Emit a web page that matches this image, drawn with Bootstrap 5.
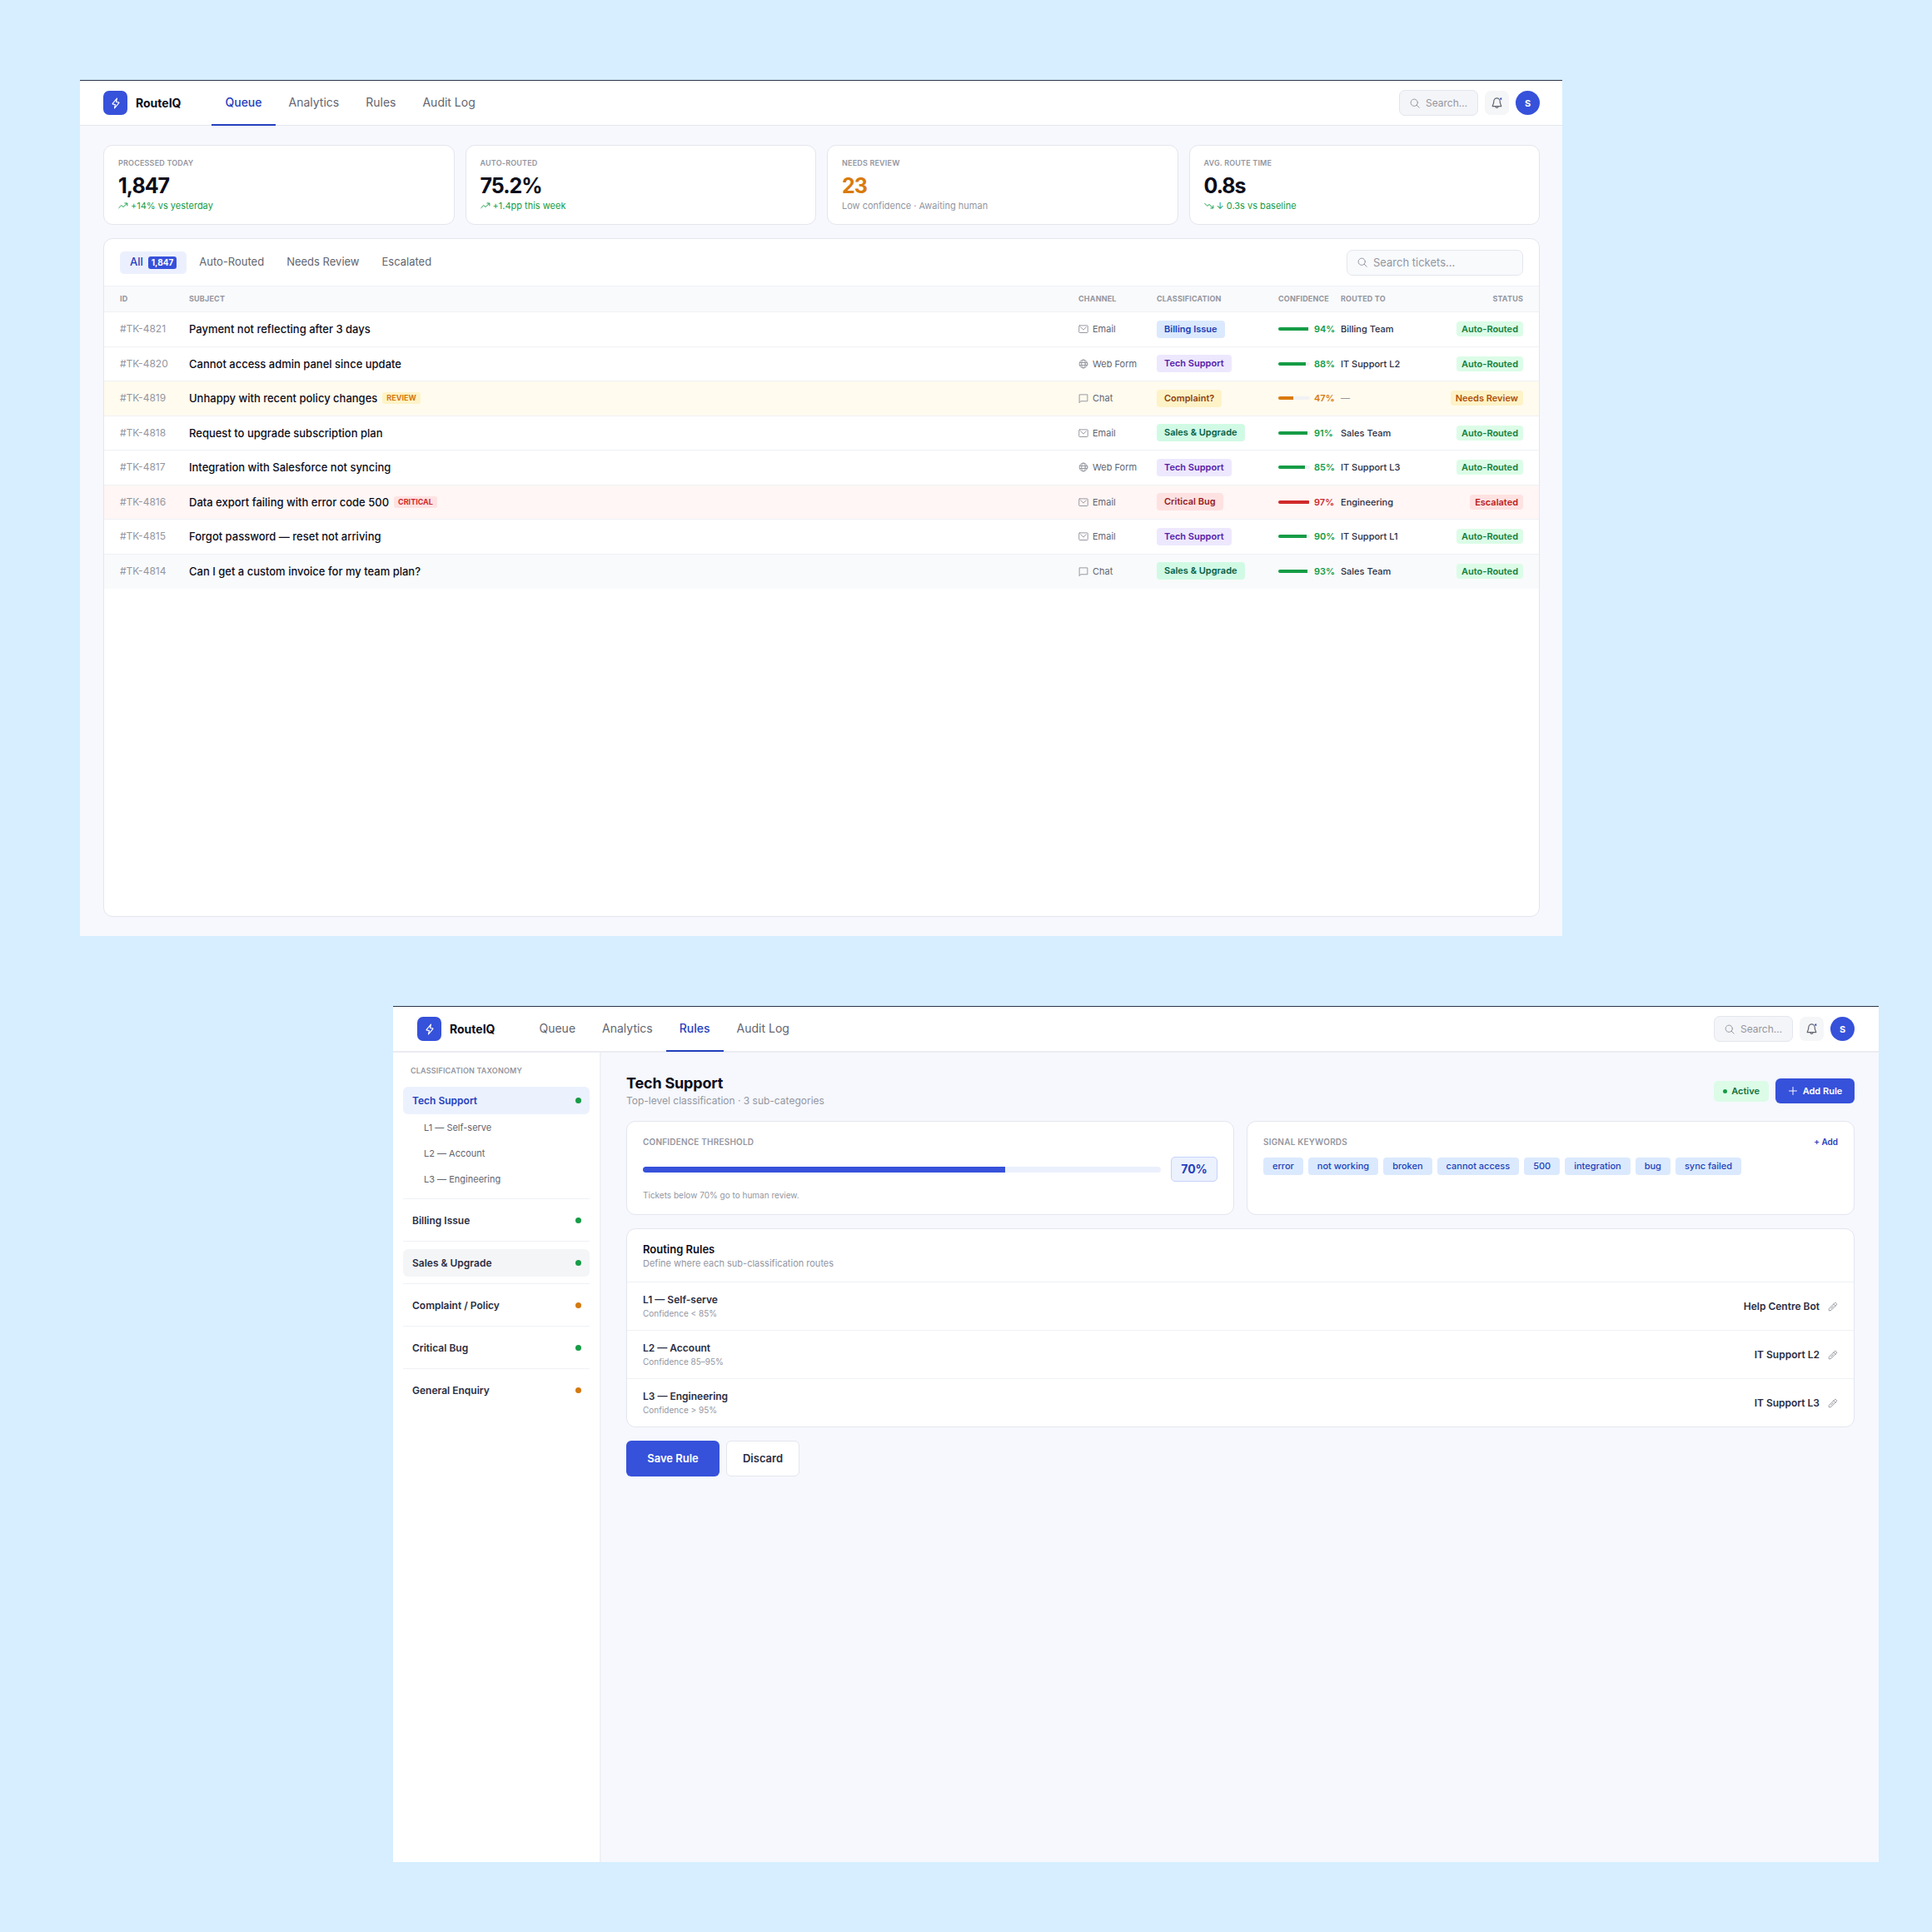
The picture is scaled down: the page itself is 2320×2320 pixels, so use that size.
<!DOCTYPE html>
<html lang="en">
<head>
<meta charset="utf-8">
<meta name="viewport" content="width=device-width, initial-scale=1">
<title>RouteIQ</title>
<link rel="stylesheet" href="https://cdn.jsdelivr.net/npm/bootstrap@5.3.0/dist/css/bootstrap.min.css">
<script src="https://cdn.jsdelivr.net/npm/bootstrap@5.3.0/dist/js/bootstrap.bundle.min.js"></script>
<style>
  :root {
    --brand: #3651da;
    --brand-ink: #2440bd;
    --ink: #0c0d1a;
    --ink-2: #2a2d42;
    --ink-3: #63656f;
    --ink-4: #94969f;
    --line: #e4e6ee;
    --line-soft: #eff1f5;
    --canvas: #f6f8fd;
    --green: #169c46;
    --orange: #d97a0c;
    --red: #d02a2c;
  }
  body {
    font-family: Inter, "Open Sans", sans-serif;
    font-size: 12px;
    line-height: 16px;
    color: var(--ink);
    background: #d6eeff;
  }
  a { text-decoration: none; }
  svg { flex: none; fill: none; stroke: currentColor; stroke-linecap: round; stroke-linejoin: round; }
  .ic { width: 12px; height: 12px; stroke-width: 1.3; }
  .desk { padding: 96px 64px 84px 96px; gap: 84px; }
  .app-window { min-height: 1028px; background: var(--canvas); border-top: 1px solid #2b3547; }
  .win-queue { margin-right: 380px; }
  .win-rules { margin-left: 376px; }

  /* top bar */
  .topbar { height: 54px; padding: 0 27px 0 28px; background: #fff; border-bottom: 1px solid var(--line); }
  .win-rules .topbar { height: 55px; padding: 0 29px; border-bottom: 2px solid #ebecf2; }
  .logo-box { width: 29px; height: 29px; border-radius: 7px; background: var(--brand); color: #fff; }
  .logo-box svg { width: 14px; height: 14px; stroke-width: 2; }
  .brand-name { font-size: 14px; font-weight: 700; margin-left: 10px; color: var(--ink); }
  .main-nav { margin-left: 37px; align-self: stretch; }
  .main-nav .nav-link { display: flex; align-items: center; padding: 0 16px; margin-bottom: -1px; font-size: 14px; color: var(--ink-3); border-bottom: 2px solid transparent; }
  .main-nav .nav-link.active { color: var(--brand-ink); font-weight: 500; border-bottom-color: var(--brand-ink); }
  .search-pill { height: 31px; padding: 0 12px; gap: 7px; border: 1px solid var(--line); border-radius: 7px; background: #f4f5f8; color: var(--ink-4); }
  .search-pill input { border: 0; outline: 0; padding: 0; background: none; font-size: 12px; width: 50px; color: var(--ink); }
  .search-pill input::placeholder { color: var(--ink-4); opacity: 1; }
  .bell { width: 29px; height: 29px; border: 0; padding: 0; border-radius: 7px; background: #f5f6f8; color: var(--ink-3); }
  .bell svg { width: 15px; height: 15px; stroke-width: 1.6; }
  .avatar { width: 29px; height: 29px; border: 0; padding: 0; border-radius: 50%; background: var(--brand); color: #fff; font-size: 11px; font-weight: 700; }

  /* queue */
  .queue-body { padding: 23px 27px 23px 28px; gap: 16px; }
  .panel { background: #fff; border: 1px solid var(--line); border-radius: 11px; }
  .stats { display: grid; grid-template-columns: repeat(4, 1fr); gap: 13px; }
  .stat { padding: 13px 17px 0; height: 96px; }
  .caps { font-size: 9px; font-weight: 600; text-transform: uppercase; color: var(--ink-4); letter-spacing: .02em; }
  .stat-value { font-size: 25px; line-height: 30px; font-weight: 700; letter-spacing: -.04em; margin: 4px 0 1px; }
  .stat-note { font-size: 11px; gap: 3px; }
  .txt-green { color: var(--green); }
  .txt-orange { color: var(--orange); }
  .toolbar { height: 56px; padding: 0 19px; }
  .filters { gap: 3px; }
  .filters .btn { display: flex; align-items: center; gap: 6px; height: 27px; padding: 0 12px; border: 0; border-radius: 5px; font-size: 13px; color: var(--ink-3); }
  .filters .btn.active { background: #ecf0fe; color: var(--brand-ink); font-weight: 500; }
  .count { padding: 0 4px; border-radius: 3px; background: var(--brand); color: #fff; font-size: 10px; font-weight: 700; }
  .search-tickets { width: 212px; background: #f8fafc; }
  .search-tickets input { flex: 1; min-width: 0; font-size: 13px; }
  .tickets { width: 100%; height: 364px; table-layout: fixed; border-collapse: collapse; }
  .tickets th { height: 31px; padding: 0; background: #f9fafc; border-top: 1px solid var(--line-soft); border-bottom: 1px solid var(--line-soft); }
  .tickets td { padding: 0; border-bottom: 1px solid var(--line-soft); white-space: nowrap; vertical-align: middle; }
  .tickets tr > :first-child { padding-left: 19px; }
  .tickets tr > :last-child { padding-right: 19px; text-align: right; }
  .row-review td { background: #fffbef; }
  .row-critical td { background: #fff6f5; }
  .row-hover td { background: #f9fafb; border-bottom-color: #f9fafb; }
  .c-id { width: 102px; } .c-channel { width: 94px; } .c-class { width: 146px; }
  .c-conf { width: 75px; } .c-routed { width: 100px; } .c-status { width: 138px; }
  .subject { font-weight: 500; font-size: 13px; }
  .flag { margin-left: 6px; padding: 0 5px; border-radius: 3px; font-size: 9px; line-height: 14px; font-weight: 700; text-transform: uppercase; }
  .flag-review { background: #fef3c7; color: #d47a10; }
  .flag-critical { background: #fee2e2; color: #d02a2c; }
  .channel { display: flex; align-items: center; gap: 5px; color: var(--ink-3); font-size: 11px; }
  .channel svg { color: var(--ink-4); }
  .tag { display: inline-block; padding: 0 9px; border-radius: 4px; font-size: 11px; line-height: 21px; font-weight: 600; }
  .tag-blue { background: #dbe9fe; color: #1c3fb4; }
  .tag-violet { background: #ede8fe; color: #5620a8; }
  .tag-amber { background: #fef3c7; color: #8c3f10; }
  .tag-mint { background: #d1fae5; color: #065f46; }
  .tag-rose { background: #fee2e2; color: #951c1c; }
  .conf { display: flex; align-items: center; gap: 5px; font-size: 11px; font-weight: 600; color: var(--green); }
  .meter { flex: none; width: 38px; height: 4px; border-radius: 2px; background: #f1f2f5; overflow: hidden; }
  .meter > span { display: block; height: 100%; background: currentColor; }
  .conf-low { color: var(--orange); }
  .conf-bug { color: var(--red); }
  .routed { font-size: 11px; font-weight: 500; color: var(--ink-2); }
  .txt-muted { color: var(--ink-4); font-weight: 400; }
  .state { display: inline-block; padding: 0 6px; border-radius: 4px; font-size: 11px; line-height: 18px; font-weight: 600; }
  .state-ok { background: #dcfce7; color: #15803d; }
  .state-review { background: #fef3c7; color: #b0500c; }
  .state-esc { background: #fee2e2; color: #b91c1c; }

  /* rules */
  .taxonomy { width: 250px; flex: none; padding: 14px 12px; background: #fff; border-right: 2px solid var(--line-soft); }
  .taxonomy .caps { margin: 0 9px 11px; }
  .tax-item { height: 33px; padding: 0 10px 0 11px; border-radius: 6px; font-size: 12px; font-weight: 600; color: var(--ink-2); }
  .tax-item.active { background: #ecf1fe; color: var(--brand-ink); }
  .tax-item.hovered { background: #f4f5f7; }
  .tax-sub { height: 31px; padding: 0 25px; font-size: 11px; color: var(--ink-3); }
  .tax-rule { height: 1px; margin: 8px 0 9px; border: 0; opacity: 1; background: var(--line-soft); }
  .dot { width: 7px; height: 7px; border-radius: 50%; background: var(--green); }
  .dot-warn { background: #d47a10; }
  .rules-body { padding: 25px 29px 25px 30px; }
  .page-title { font-size: 18px; line-height: 24px; font-weight: 700; letter-spacing: -.01em; margin: 0; }
  .small-note { font-size: 12px; line-height: 18px; color: var(--ink-4); }
  .fine-note { font-size: 10px; color: var(--ink-4); }
  .active-badge { height: 25px; padding: 0 11px; gap: 5px; border-radius: 5px; background: #dcfce7; color: #15703a; font-size: 11px; font-weight: 600; }
  .active-badge .dot { width: 5px; height: 5px; }
  .btn-brand { display: flex; align-items: center; justify-content: center; border: 0; border-radius: 6px; background: var(--brand); color: #fff; font-size: 13px; font-weight: 600; padding: 0; }
  .btn-add { height: 30px; width: 95px; gap: 6px; font-size: 11px; }
  .btn-save { height: 43px; width: 112px; font-size: 13px; }
  .btn-discard { height: 43px; width: 88px; padding: 0; border: 1px solid var(--line); border-radius: 6px; background: #fff; color: var(--ink-2); font-size: 13px; font-weight: 600; }
  .pair { display: grid; grid-template-columns: 1fr 1fr; gap: 15px; margin: 15px 0 16px; }
  .pair .panel { padding: 16px 19px 15px; }
  .caps-lg { font-size: 10px; }
  .slider { appearance: none; -webkit-appearance: none; flex: 1; min-width: 0; height: 7px; margin: 0; border-radius: 4px; background: linear-gradient(90deg, var(--brand) 70%, #ecf0fd 70%); }
  .slider::-webkit-slider-thumb { -webkit-appearance: none; width: 1px; height: 7px; background: none; }
  .slider::-moz-range-thumb { width: 1px; height: 7px; border: 0; background: none; }
  .threshold-row { gap: 12px; margin: 10px 0 8px; }
  .pct { width: 56px; height: 30px; border: 1px solid #c5d2fa; border-radius: 5px; background: #ecf1fe; color: var(--brand-ink); font-size: 14px; font-weight: 700; }
  .btn-plain { padding: 0; border: 0; font-size: 10px; line-height: 16px; font-weight: 600; color: var(--brand-ink); }
  .chips { gap: 6px; margin-top: 11px; }
  .chip { padding: 0 11px; border-radius: 4px; background: #dbe9fe; color: #1d43b8; font-size: 11px; line-height: 21px; font-weight: 500; }
  .rules-head { height: 63px; padding: 15px 19px; }
  .rules-head h2 { font-size: 13px; line-height: 18px; font-weight: 600; margin: 0; }
  .rules-head p { margin: 0; font-size: 11px; color: var(--ink-4); }
  .rule-row { height: 58px; padding: 0 19px; border-top: 1px solid var(--line-soft); font-size: 12px; font-weight: 600; color: var(--ink-2); }
  .rule-row .fine-note { font-weight: 400; }
  .rule-target { gap: 10px; }
  .edit { padding: 0; border: 0; background: none; color: var(--ink-4); line-height: 0; }
</style>
</head>
<body>

<svg width="0" height="0" class="position-absolute" aria-hidden="true">
  <symbol id="i-bolt" viewBox="0 0 24 24"><path d="M14.500 2 5.500 12.600c-.4.6-.2 1.100.5 1.200l5 .7L9.500 22l9-10.600c.4-.6.2-1.100-.5-1.200l-5-.7Z"/></symbol>
  <symbol id="i-search" viewBox="0 0 16 16"><circle cx="7" cy="7" r="5.500"/><path d="m11 11 4 4"/></symbol>
  <symbol id="i-bell" viewBox="0 0 20 20"><path d="M15 8a5 5.500 0 0 0-10 0c0 4.500-2 5.500-2 7.500h14c0-2-2-3-2-7.500M8 16a2 2 0 0 0 4 0"/><circle cx="16.500" cy="3.500" r="1.800" fill="#2440bd" stroke="#f5f6f8" stroke-width=".6"/></symbol>
  <symbol id="i-up" viewBox="0 0 16 16"><path d="m1 11.500 4-4 3 2.500 6-5.500M10.500 4H14.500v4"/></symbol>
  <symbol id="i-down" viewBox="0 0 16 16"><path d="m1 4.500 4 4L8 6l6 5.500M10.500 12H14.500V8"/></symbol>
  <symbol id="i-mail" viewBox="0 0 16 16"><rect x="1" y="2.500" width="14" height="11.500" rx="1"/><path d="m3.500 5 4.500 4.500L12.500 5"/></symbol>
  <symbol id="i-web" viewBox="0 0 16 16"><circle cx="8" cy="8" r="6.500"/><ellipse cx="8" cy="8" rx="3" ry="6.500"/><path d="M2 6h12M2 10h12"/></symbol>
  <symbol id="i-chat" viewBox="0 0 16 16"><path d="M1.500 15V2.500h13v10.500H4Z"/></symbol>
  <symbol id="i-plus" viewBox="0 0 16 16"><path d="M8 2v12M2 8h12"/></symbol>
  <symbol id="i-pen" viewBox="0 0 16 16"><path d="m2.200 10.800 8.600-8.600a1.500 1.500 0 0 1 2.100 0l.9.9a1.500 1.500 0 0 1 0 2.100l-8.600 8.600-2.600.7a1 1 0 0 1-1.200-1.200ZM9 4l3 3M5 11l3.500-3.500"/></symbol>
</svg>

<main class="desk d-flex flex-column">

  <section class="app-window win-queue d-flex flex-column" aria-label="Queue">
    <header class="topbar d-flex align-items-center">
      <span class="logo-box d-flex align-items-center justify-content-center"><svg><use href="#i-bolt"/></svg></span>
      <a href="#" class="brand-name">RouteIQ</a>
      <nav class="main-nav nav flex-nowrap">
        <a class="nav-link active" href="#">Queue</a>
        <a class="nav-link" href="#">Analytics</a>
        <a class="nav-link" href="#">Rules</a>
        <a class="nav-link" href="#">Audit Log</a>
      </nav>
      <div class="d-flex align-items-center gap-2 ms-auto">
        <label class="search-pill d-flex align-items-center"><svg class="ic"><use href="#i-search"/></svg><input type="text" placeholder="Search…" aria-label="Search"></label>
        <button class="bell d-flex align-items-center justify-content-center" aria-label="Notifications"><svg><use href="#i-bell"/></svg></button>
        <button class="avatar">S</button>
      </div>
    </header>

    <div class="queue-body d-flex flex-column flex-grow-1">
      <div class="stats">
        <div class="panel stat">
          <div class="caps">Processed today</div>
          <div class="stat-value">1,847</div>
          <div class="stat-note d-flex align-items-center txt-green"><svg class="ic"><use href="#i-up"/></svg>+14% vs yesterday</div>
        </div>
        <div class="panel stat">
          <div class="caps">Auto-routed</div>
          <div class="stat-value">75.2%</div>
          <div class="stat-note d-flex align-items-center txt-green"><svg class="ic"><use href="#i-up"/></svg>+1.4pp this week</div>
        </div>
        <div class="panel stat">
          <div class="caps">Needs review</div>
          <div class="stat-value txt-orange">23</div>
          <div class="stat-note txt-muted">Low confidence · Awaiting human</div>
        </div>
        <div class="panel stat">
          <div class="caps">Avg. route time</div>
          <div class="stat-value">0.8s</div>
          <div class="stat-note d-flex align-items-center txt-green"><svg class="ic"><use href="#i-down"/></svg>↓ 0.3s vs baseline</div>
        </div>
      </div>

      <div class="panel flex-grow-1 overflow-hidden">
        <div class="toolbar d-flex align-items-center justify-content-between">
          <div class="filters d-flex">
            <button class="btn active">All <span class="count">1,847</span></button>
            <button class="btn">Auto-Routed</button>
            <button class="btn">Needs Review</button>
            <button class="btn">Escalated</button>
          </div>
          <label class="search-pill search-tickets d-flex align-items-center"><svg class="ic"><use href="#i-search"/></svg><input type="text" placeholder="Search tickets…" aria-label="Search tickets"></label>
        </div>
        <table class="tickets">
          <colgroup><col class="c-id"><col><col class="c-channel"><col class="c-class"><col class="c-conf"><col class="c-routed"><col class="c-status"></colgroup>
          <thead>
            <tr class="caps"><th>ID</th><th>Subject</th><th>Channel</th><th>Classification</th><th>Confidence</th><th>Routed to</th><th>Status</th></tr>
          </thead>
          <tbody>
            <tr>
              <td class="txt-muted">#TK-4821</td><td class="subject">Payment not reflecting after 3 days</td>
              <td><span class="channel"><svg class="ic"><use href="#i-mail"/></svg>Email</span></td>
              <td><span class="tag tag-blue">Billing Issue</span></td>
              <td><span class="conf"><span class="meter"><span style="width:94%"></span></span>94%</span></td>
              <td class="routed">Billing Team</td><td><span class="state state-ok">Auto-Routed</span></td>
            </tr>
            <tr>
              <td class="txt-muted">#TK-4820</td><td class="subject">Cannot access admin panel since update</td>
              <td><span class="channel"><svg class="ic"><use href="#i-web"/></svg>Web Form</span></td>
              <td><span class="tag tag-violet">Tech Support</span></td>
              <td><span class="conf"><span class="meter"><span style="width:88%"></span></span>88%</span></td>
              <td class="routed">IT Support L2</td><td><span class="state state-ok">Auto-Routed</span></td>
            </tr>
            <tr class="row-review">
              <td class="txt-muted">#TK-4819</td><td class="subject"><span class="d-flex align-items-center">Unhappy with recent policy changes<span class="flag flag-review">Review</span></span></td>
              <td><span class="channel"><svg class="ic"><use href="#i-chat"/></svg>Chat</span></td>
              <td><span class="tag tag-amber">Complaint?</span></td>
              <td><span class="conf conf-low"><span class="meter"><span style="width:47%"></span></span>47%</span></td>
              <td class="routed txt-muted">—</td><td><span class="state state-review">Needs Review</span></td>
            </tr>
            <tr>
              <td class="txt-muted">#TK-4818</td><td class="subject">Request to upgrade subscription plan</td>
              <td><span class="channel"><svg class="ic"><use href="#i-mail"/></svg>Email</span></td>
              <td><span class="tag tag-mint">Sales &amp; Upgrade</span></td>
              <td><span class="conf"><span class="meter"><span style="width:91%"></span></span>91%</span></td>
              <td class="routed">Sales Team</td><td><span class="state state-ok">Auto-Routed</span></td>
            </tr>
            <tr>
              <td class="txt-muted">#TK-4817</td><td class="subject">Integration with Salesforce not syncing</td>
              <td><span class="channel"><svg class="ic"><use href="#i-web"/></svg>Web Form</span></td>
              <td><span class="tag tag-violet">Tech Support</span></td>
              <td><span class="conf"><span class="meter"><span style="width:85%"></span></span>85%</span></td>
              <td class="routed">IT Support L3</td><td><span class="state state-ok">Auto-Routed</span></td>
            </tr>
            <tr class="row-critical">
              <td class="txt-muted">#TK-4816</td><td class="subject"><span class="d-flex align-items-center">Data export failing with error code 500<span class="flag flag-critical">Critical</span></span></td>
              <td><span class="channel"><svg class="ic"><use href="#i-mail"/></svg>Email</span></td>
              <td><span class="tag tag-rose">Critical Bug</span></td>
              <td><span class="conf conf-bug"><span class="meter"><span style="width:97%"></span></span>97%</span></td>
              <td class="routed">Engineering</td><td><span class="state state-esc">Escalated</span></td>
            </tr>
            <tr>
              <td class="txt-muted">#TK-4815</td><td class="subject">Forgot password — reset not arriving</td>
              <td><span class="channel"><svg class="ic"><use href="#i-mail"/></svg>Email</span></td>
              <td><span class="tag tag-violet">Tech Support</span></td>
              <td><span class="conf"><span class="meter"><span style="width:90%"></span></span>90%</span></td>
              <td class="routed">IT Support L1</td><td><span class="state state-ok">Auto-Routed</span></td>
            </tr>
            <tr class="row-hover">
              <td class="txt-muted">#TK-4814</td><td class="subject">Can I get a custom invoice for my team plan?</td>
              <td><span class="channel"><svg class="ic"><use href="#i-chat"/></svg>Chat</span></td>
              <td><span class="tag tag-mint">Sales &amp; Upgrade</span></td>
              <td><span class="conf"><span class="meter"><span style="width:93%"></span></span>93%</span></td>
              <td class="routed">Sales Team</td><td><span class="state state-ok">Auto-Routed</span></td>
            </tr>
          </tbody>
        </table>
      </div>
    </div>
  </section>

  <section class="app-window win-rules d-flex flex-column" aria-label="Rules">
    <header class="topbar d-flex align-items-center">
      <span class="logo-box d-flex align-items-center justify-content-center"><svg><use href="#i-bolt"/></svg></span>
      <a href="#" class="brand-name">RouteIQ</a>
      <nav class="main-nav nav flex-nowrap">
        <a class="nav-link" href="#">Queue</a>
        <a class="nav-link" href="#">Analytics</a>
        <a class="nav-link active" href="#">Rules</a>
        <a class="nav-link" href="#">Audit Log</a>
      </nav>
      <div class="d-flex align-items-center gap-2 ms-auto">
        <label class="search-pill d-flex align-items-center"><svg class="ic"><use href="#i-search"/></svg><input type="text" placeholder="Search…" aria-label="Search"></label>
        <button class="bell d-flex align-items-center justify-content-center" aria-label="Notifications"><svg><use href="#i-bell"/></svg></button>
        <button class="avatar">S</button>
      </div>
    </header>

    <div class="d-flex flex-grow-1">
      <aside class="taxonomy">
        <div class="caps">Classification taxonomy</div>
        <a href="#" class="tax-item active d-flex align-items-center justify-content-between">Tech Support<span class="dot"></span></a>
        <a href="#" class="tax-sub d-flex align-items-center">L1 — Self-serve</a>
        <a href="#" class="tax-sub d-flex align-items-center">L2 — Account</a>
        <a href="#" class="tax-sub d-flex align-items-center">L3 — Engineering</a>
        <hr class="tax-rule">
        <a href="#" class="tax-item d-flex align-items-center justify-content-between">Billing Issue<span class="dot"></span></a>
        <hr class="tax-rule">
        <a href="#" class="tax-item hovered d-flex align-items-center justify-content-between">Sales &amp; Upgrade<span class="dot"></span></a>
        <hr class="tax-rule">
        <a href="#" class="tax-item d-flex align-items-center justify-content-between">Complaint / Policy<span class="dot dot-warn"></span></a>
        <hr class="tax-rule">
        <a href="#" class="tax-item d-flex align-items-center justify-content-between">Critical Bug<span class="dot"></span></a>
        <hr class="tax-rule">
        <a href="#" class="tax-item d-flex align-items-center justify-content-between">General Enquiry<span class="dot dot-warn"></span></a>
      </aside>

      <div class="rules-body flex-grow-1">
        <div class="d-flex align-items-center justify-content-between">
          <div>
            <h1 class="page-title">Tech Support</h1>
            <div class="small-note">Top-level classification · 3 sub-categories</div>
          </div>
          <div class="d-flex align-items-center gap-2">
            <span class="active-badge d-flex align-items-center"><span class="dot"></span>Active</span>
            <button class="btn btn-brand btn-add"><svg class="ic"><use href="#i-plus"/></svg>Add Rule</button>
          </div>
        </div>

        <div class="pair">
          <div class="panel">
            <label class="caps caps-lg d-block" for="threshold">Confidence threshold</label>
            <div class="threshold-row d-flex align-items-center">
              <input id="threshold" class="slider" type="range" min="0" max="100" value="70">
              <output for="threshold" class="pct d-flex align-items-center justify-content-center">70%</output>
            </div>
            <div class="fine-note">Tickets below 70% go to human review.</div>
          </div>
          <div class="panel">
            <div class="d-flex justify-content-between">
              <span class="caps caps-lg">Signal keywords</span>
              <button class="btn btn-plain">+ Add</button>
            </div>
            <div class="chips d-flex flex-wrap">
              <span class="chip">error</span><span class="chip">not working</span><span class="chip">broken</span><span class="chip">cannot access</span><span class="chip">500</span><span class="chip">integration</span><span class="chip">bug</span><span class="chip">sync failed</span>
            </div>
          </div>
        </div>

        <div class="panel">
          <div class="rules-head">
            <h2>Routing Rules</h2>
            <p>Define where each sub-classification routes</p>
          </div>
          <div class="rule-row d-flex align-items-center justify-content-between">
            <div>L1 — Self-serve<div class="fine-note">Confidence &lt; 85%</div></div>
            <div class="rule-target d-flex align-items-center">Help Centre Bot<button class="edit" aria-label="Edit L1"><svg class="ic"><use href="#i-pen"/></svg></button></div>
          </div>
          <div class="rule-row d-flex align-items-center justify-content-between">
            <div>L2 — Account<div class="fine-note">Confidence 85–95%</div></div>
            <div class="rule-target d-flex align-items-center">IT Support L2<button class="edit" aria-label="Edit L2"><svg class="ic"><use href="#i-pen"/></svg></button></div>
          </div>
          <div class="rule-row d-flex align-items-center justify-content-between">
            <div>L3 — Engineering<div class="fine-note">Confidence &gt; 95%</div></div>
            <div class="rule-target d-flex align-items-center">IT Support L3<button class="edit" aria-label="Edit L3"><svg class="ic"><use href="#i-pen"/></svg></button></div>
          </div>
        </div>

        <div class="d-flex gap-2 mt-3">
          <button class="btn btn-brand btn-save">Save Rule</button>
          <button class="btn btn-discard">Discard</button>
        </div>
      </div>
    </div>
  </section>
</main>
</body>
</html>
